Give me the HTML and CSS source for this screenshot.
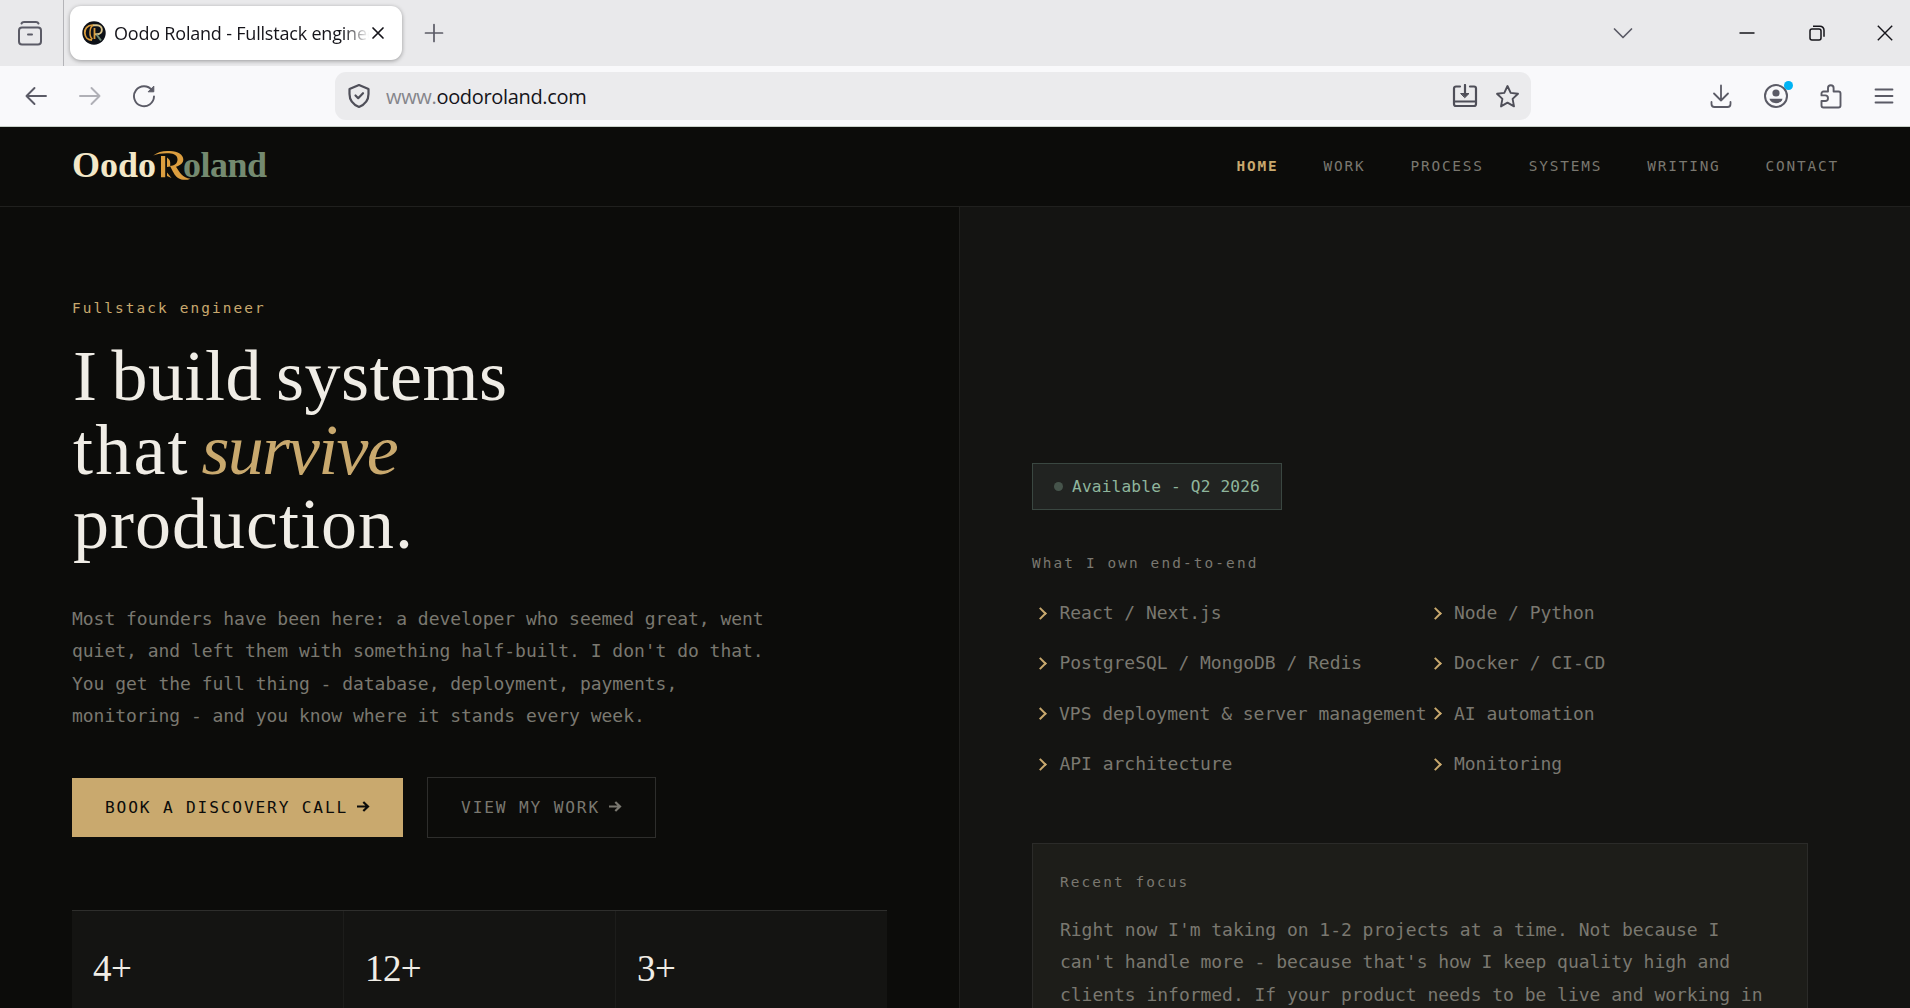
FILE: index.html
```html
<!DOCTYPE html>
<html lang="en">
<head>
    <meta charset="UTF-8">
    <meta name="viewport" content="width=device-width, initial-scale=1.0">
    <title>Oodo Roland - Fullstack engineer</title>
    <link rel="stylesheet" href="styles.css">
</head>
<body>

<!-- Browser window -->
<div class="tab-bar">
    <div class="tab-overview">
        <svg width="26" height="26" viewBox="0 0 26 26" fill="none" stroke="#5b5b66" stroke-width="2" stroke-linecap="round">
            <path d="M4.500 3.500C5 2.300 5.600 2 7 2h12c1.400 0 2 .3 2.500 1.500"/>
            <rect x="2" y="7.500" width="22" height="17" rx="3"/>
            <path d="M11 14.500h4"/>
        </svg>
    </div>
    <div class="tab">
        <svg class="favicon" width="24" height="24" viewBox="0 0 24 24" fill="none">
            <circle cx="12" cy="12" r="11.700" fill="#0d1017"/>
            <path d="M11 4.200C5 4 2.500 8 2.800 12c.3 4 3 7 7.200 7" stroke="#d99c3c" stroke-width="1.800"/>
            <path d="M11.500 4.300C7 6 7 16 10.500 18" stroke="#d99c3c" stroke-width="1.500"/>
            <path d="M11 4.300h4c6.500 0 6.500 9 0 9h-2" stroke="#d8c48c" stroke-width="1.900"/>
            <path d="M12.500 7v11" stroke="#d99c3c" stroke-width="1.800"/>
            <path d="M14.500 13.500l4.500 6" stroke="#6f8a76" stroke-width="2"/>
        </svg>
        <span class="tab-title">Oodo Roland - Fullstack engineer</span>
        <svg width="14" height="14" viewBox="0 0 14 14" stroke="#15141a" stroke-width="1.700" stroke-linecap="round"><path d="M2 2l10 10M12 2L2 12"/></svg>
    </div>
    <svg class="new-tab" width="20" height="20" viewBox="0 0 20 20" stroke="#5b5b66" stroke-width="1.700" stroke-linecap="round"><path d="M10 1.500v17M1.500 10h17"/></svg>
    <div class="window-controls">
        <svg width="20" height="20" viewBox="0 0 20 20" fill="none" stroke="#5b5b66" stroke-width="1.700" stroke-linecap="round" stroke-linejoin="round"><path d="M1.500 6l8.500 8.500L18.500 6"/></svg>
        <svg class="minimize" width="16" height="16" viewBox="0 0 16 16" stroke="#15141a" stroke-width="1.500"><path d="M.5 8h15"/></svg>
        <svg class="restore" width="16" height="16" viewBox="0 0 16 16" fill="none" stroke="#15141a" stroke-width="1.500"><rect x="1" y="4" width="11" height="11" rx="2"/><path d="M4 1.200h7a4 4 0 0 1 4 4v6.500"/></svg>
        <svg class="close" width="16" height="16" viewBox="0 0 16 16" stroke="#15141a" stroke-width="1.400"><path d="M.8.800l14.400 14.400M15.200.800L.8 15.200"/></svg>
    </div>
</div>

<div class="toolbar">
    <div class="nav-buttons">
        <svg width="24" height="24" viewBox="0 0 24 24" fill="none" stroke="#5b5b66" stroke-width="1.900" stroke-linecap="round" stroke-linejoin="round"><path d="M22 12H2.500M10.500 4l-8 8 8 8"/></svg>
        <svg width="24" height="24" viewBox="0 0 24 24" fill="none" stroke="#b0b0b6" stroke-width="1.900" stroke-linecap="round" stroke-linejoin="round"><path d="M2 12h19.500M13.500 4l8 8-8 8"/></svg>
        <svg width="24" height="24" viewBox="0 0 24 24" fill="none" stroke="#5b5b66" stroke-width="1.900" stroke-linecap="round"><path d="M20 6.200A10 10 0 1 0 22 12.500"/><path d="M21.800 2.500v5.300h-5.300z" fill="#5b5b66" stroke-width="1" stroke-linejoin="round"/></svg>
    </div>
    <div class="url-bar">
        <svg width="24" height="26" viewBox="0 0 24 26" fill="none" stroke="#4f4f59" stroke-width="2.200" stroke-linecap="round" stroke-linejoin="round"><path d="M12 2l9.500 4v5c0 6-3.500 10.500-9.500 13C6 21.500 2.500 17 2.500 11V6z"/><path d="M8.500 12.500l2.700 2.700 4.800-5"/></svg>
        <span class="url"><span class="url-sub">www.</span>oodoroland.com</span>
        <svg width="26" height="24" viewBox="0 0 26 24" fill="none" stroke="#4f4f59" stroke-width="2.200" stroke-linecap="round" stroke-linejoin="round"><path d="M8 2.500H4a2 2 0 0 0-2 2V20a2 2 0 0 0 2 2h18a2 2 0 0 0 2-2V4.500a2 2 0 0 0-2-2h-4M2.500 17.500h21M13 1v10"/><path d="M9 9.500h8l-4 4z" fill="#4f4f59" stroke-width="1"/></svg>
        <svg class="star" width="25" height="25" viewBox="0 0 25 25" fill="none" stroke="#4f4f59" stroke-width="1.900" stroke-linejoin="round"><path d="M12.500 2l3.200 6.900 7.300.900-5.400 5.100 1.400 7.500-6.500-3.700L6 22.400l1.400-7.500L2 9.800l7.300-.9z"/></svg>
    </div>
    <div class="toolbar-actions">
        <svg width="24" height="24" viewBox="0 0 24 24" fill="none" stroke="#5b5b66" stroke-width="1.800" stroke-linecap="round" stroke-linejoin="round"><path d="M12 1.500v15M5 9.500l7 7 7-7M2.500 18v2a3 3 0 0 0 3 3h13a3 3 0 0 0 3-3v-2"/></svg>
        <div class="account">
            <svg width="24" height="24" viewBox="0 0 24 24" fill="none" stroke="#5b5b66" stroke-width="2"><circle cx="12" cy="12" r="11"/><circle cx="12" cy="9" r="3.600" fill="#5b5b66" stroke="none"/><path d="M5.500 14.800h13c-.5 2.600-3.300 4.400-6.500 4.400s-6-1.800-6.500-4.400z" fill="#5b5b66" stroke="none"/></svg>
            <span class="account-dot"></span>
        </div>
        <svg width="24" height="26" viewBox="0 0 24 26" fill="none" stroke="#5b5b66" stroke-width="1.900" stroke-linejoin="round"><path d="M4.500 8.500H9V5a2.800 2.800 0 0 1 5.600 0v3.500h4.900a2 2 0 0 1 2 2V22.500a2 2 0 0 1-2 2h-15a2 2 0 0 1-2-2V18h3.700a2.800 2.800 0 0 0 0-5.600H2.500v-1.900a2 2 0 0 1 2-2z"/></svg>
        <svg width="20" height="18" viewBox="0 0 20 18" stroke="#5b5b66" stroke-width="1.800" stroke-linecap="round"><path d="M1.500 2.500h17M1.500 9h17M1.500 15.500h17"/></svg>
    </div>
</div>

<!-- Site header -->
<header class="site-header">
    <a class="logo"><span class="logo-first">Oodo</span><svg class="logo-mark" width="40" height="34" viewBox="0 0 40 34"><path d="M1.300 6.500C6 2.500 12 1.500 18 2c8 .5 13.300 3.500 13.300 8.500 0 3.500-3 6-7.300 7.200 3.500 5.500 6.500 11.300 14.500 12-4 1.800-9 1.500-12.500-.7-3.500-2.300-5.500-7.500-8-12 4-.3 7.500-2 7.500-6.500 0-4-3.500-6-8.500-6.200C11 4 6 4.800 1.300 6.500z" fill="#dc9e3f"/><path d="M9 7h4.200v21.300H9zM15 8.500c2 1.500 3.200 3 3.200 5v4L15 18zM15 23.500l4.500 5.500L15 27z" fill="#dc9e3f"/></svg><span class="logo-last">oland</span></a>
    <nav class="site-nav">
        <a class="active">HOME</a>
        <a>WORK</a>
        <a>PROCESS</a>
        <a>SYSTEMS</a>
        <a>WRITING</a>
        <a>CONTACT</a>
    </nav>
</header>

<main class="hero">
    <section class="hero-left">
        <p class="eyebrow">Fullstack engineer</p>
        <h1>
            <span class="line line-1">I build systems</span>
            <span class="line line-2">that <em>survive</em></span>
            <span class="line line-3">production.</span>
        </h1>
        <p class="intro">Most founders have been here: a developer who seemed great, went quiet, and left them with something half-built. I don't do that. You get the full thing - database, deployment, payments, monitoring - and you know where it stands every week.</p>
        <div class="cta">
            <a class="btn btn-primary">BOOK A DISCOVERY CALL <svg class="arrow" viewBox="0 0 16 16"><path d="M2 7.500h11M8.300 3l4.700 4.500-4.700 4.500"/></svg></a>
            <a class="btn btn-outline">VIEW MY WORK <svg class="arrow" viewBox="0 0 16 16"><path d="M2 7.500h11M8.300 3l4.700 4.500-4.700 4.500"/></svg></a>
        </div>
        <div class="stats">
            <div class="stat">4+</div>
            <div class="stat">12+</div>
            <div class="stat">3+</div>
        </div>
    </section>

    <section class="hero-right">
        <div class="badge"><span class="badge-dot"></span>Available - Q2 2026</div>
        <p class="label">What I own end-to-end</p>
        <ul class="skills">
            <li>React / Next.js</li>
            <li>Node / Python</li>
            <li>PostgreSQL / MongoDB / Redis</li>
            <li>Docker / CI-CD</li>
            <li>VPS deployment &amp; server management</li>
            <li>AI automation</li>
            <li>API architecture</li>
            <li>Monitoring</li>
        </ul>
        <div class="focus-card">
            <p class="label">Recent focus</p>
            <p class="focus-text">Right now I'm taking on 1-2 projects at a time. Not because I can't handle more - because that's how I keep quality high and clients informed. If your product needs to be live and working in</p>
        </div>
    </section>
</main>

</body>
</html>
```
FILE: styles.css
```css
* {
    box-sizing: border-box;
    margin: 0;
    padding: 0;
}

html {
    overflow: hidden;
}

body {
    height: 100vh;
    overflow: hidden;
    display: flex;
    flex-direction: column;
    background-color: #0c0c0a;
    color: #7a7870;
    font-family: "DejaVu Sans Mono", monospace;
    font-size: 18px;
    line-height: 1.8;
}

svg {
    display: block;
    flex: none;
}

/* Browser window */
.tab-bar {
    display: flex;
    align-items: center;
    flex: none;
    height: 66px;
    background-color: #e9e9eb;
}

.tab-overview {
    display: flex;
    align-items: center;
    width: 64px;
    height: 66px;
    padding-left: 17px;
    border-right: 1px solid #b4b4b8;
}

.tab {
    display: flex;
    align-items: center;
    width: 332px;
    height: 54px;
    margin-left: 6px;
    padding: 0 17px 0 12px;
    background-color: #fff;
    border-radius: 11px;
    box-shadow: 0 1px 4px rgba(0, 0, 0, 0.35);
}

.tab-title {
    flex: 1;
    margin: 0 2px 0 8px;
    overflow: hidden;
    white-space: nowrap;
    color: #15141a;
    font-family: "Open Sans", "Noto Sans", sans-serif;
    font-size: 18px;
    letter-spacing: -0.2px;
    mask-image: linear-gradient(to left, transparent, #000 26px);
}

.new-tab {
    margin-left: 22px;
}

.window-controls {
    display: flex;
    align-items: center;
    margin-left: auto;
    padding-right: 17px;
}

.minimize {
    margin-left: 106px;
}

.restore {
    margin-left: 54px;
}

.close {
    margin-left: 52px;
}

.toolbar {
    display: flex;
    align-items: center;
    flex: none;
    height: 61px;
    background-color: #f9f9fb;
    border-bottom: 1px solid #c8d0c8;
}

.nav-buttons {
    display: flex;
    gap: 30px;
    width: 335px;
    padding-left: 24px;
}

.url-bar {
    display: flex;
    align-items: center;
    width: 1196px;
    height: 48px;
    padding: 0 11px 0 12px;
    background-color: #ebebed;
    border-radius: 11px;
}

.url {
    flex: 1;
    margin-left: 15px;
    padding-top: 2px;
    color: #15141a;
    font-family: "Open Sans", "Noto Sans", sans-serif;
    font-size: 20px;
    letter-spacing: -0.33px;
}

.url-sub {
    color: #85858b;
}

.star {
    margin-left: 17px;
}

.toolbar-actions {
    display: flex;
    align-items: center;
    gap: 31px;
    margin-left: auto;
    padding-right: 16px;
}

.account {
    position: relative;
}

.account-dot {
    position: absolute;
    top: -3px;
    right: -5px;
    width: 9px;
    height: 9px;
    border-radius: 50%;
    background-color: #00b3f4;
}

/* Site header */
.site-header {
    display: flex;
    align-items: center;
    justify-content: space-between;
    flex: none;
    height: 80px;
    padding: 0 71px 0 72px;
    border-bottom: 1px solid #20201e;
}

.logo {
    display: flex;
    align-items: center;
    padding-bottom: 4px;
    font-family: "Liberation Serif", serif;
    font-size: 36px;
    font-weight: bold;
    line-height: 1;
}

.logo-first {
    color: #f3e8c8;
}

.logo-mark {
    margin: 3px -9px 0 -4px;
}

.logo-last {
    color: #748a70;
    letter-spacing: -0.5px;
}

.site-nav {
    display: flex;
    gap: 45px;
    font-size: 14.4px;
    letter-spacing: 1.82px;
}

.active {
    color: #c9a96e;
    font-weight: bold;
}

/* Hero */
.hero {
    display: grid;
    grid-template-columns: 959px 1fr;
    flex: 1;
    min-height: 0;
    overflow: hidden;
}

.hero-left {
    padding: 89px 72px 0;
}

.eyebrow {
    color: #c9a96e;
    font-size: 14.4px;
    letter-spacing: 2.1px;
}

h1 {
    margin-top: 17px;
    padding-left: 1px;
    color: #f0ede6;
    font-family: "Liberation Serif", serif;
    font-size: 72px;
    font-weight: normal;
    line-height: 74px;
}

.line {
    display: block;
}

.line-1 {
    letter-spacing: 0.5px;
    word-spacing: -4.5px;
}

.line-2 {
    letter-spacing: 2.2px;
    word-spacing: -8.5px;
}

.line-3 {
    letter-spacing: 1px;
}

h1 em {
    color: #c9a96e;
    letter-spacing: -1.8px;
}

.intro {
    width: 700px;
    margin-top: 42px;
    letter-spacing: -0.03px;
}

.cta {
    display: flex;
    align-items: center;
    gap: 24px;
    margin-top: 44.5px;
}

.btn {
    display: flex;
    align-items: center;
    gap: 7px;
    height: 59px;
    padding: 0 32px 0 33px;
    font-size: 16.2px;
    letter-spacing: 1.83px;
    white-space: nowrap;
}

.btn-primary {
    background-color: #c9a96e;
    color: #0c0c0a;
}

.btn-outline {
    height: 61px;
    border: 1px solid #2e2e2c;
}

.arrow {
    width: 16px;
    height: 16px;
    fill: none;
    stroke: currentColor;
    stroke-width: 2.2;
}

.stats {
    display: grid;
    grid-template-columns: repeat(3, 1fr);
    gap: 1px;
    margin-top: 72px;
    background-color: #1d1d1b;
    border-top: 1px solid #2e2e2c;
}

.stat {
    height: 150px;
    padding: 36px 21px;
    background-color: #141412;
    color: #f0ede6;
    font-family: "Liberation Serif", serif;
    font-size: 37px;
    line-height: 44px;
    letter-spacing: -0.6px;
}

.hero-right {
    padding: 256px 102px 0 72px;
    background-color: #141412;
    border-left: 1px solid #20201e;
}

.badge {
    display: flex;
    align-items: center;
    gap: 9px;
    width: 250px;
    height: 47px;
    padding-left: 21px;
    background-color: #212321;
    border: 1px solid #3a4741;
    color: #8fb59c;
    font-size: 16.2px;
    letter-spacing: 0.15px;
}

.badge-dot {
    width: 9px;
    height: 9px;
    border-radius: 50%;
    background-color: #46544b;
}

.label {
    font-size: 14.4px;
    letter-spacing: 2.12px;
}

.hero-right > .label {
    margin-top: 41px;
}

.skills {
    display: grid;
    grid-template-columns: 394.5px 1fr;
    row-gap: 18px;
    margin-top: 20px;
    list-style: none;
    white-space: nowrap;
    letter-spacing: -0.03px;
}

.skills li {
    display: flex;
    align-items: center;
}

.skills li::before {
    content: "";
    width: 7px;
    height: 7px;
    margin: 0 14.5px 0 4px;
    border-top: 2px solid #c9a96e;
    border-right: 2px solid #c9a96e;
    transform: rotate(45deg);
}

.focus-card {
    height: 200px;
    margin-top: 62.5px;
    padding: 26px 27px;
    background-color: #1d1d19;
    border: 1px solid #2b2b29;
}

.focus-text {
    margin-top: 18px;
    letter-spacing: -0.03px;
}
```
